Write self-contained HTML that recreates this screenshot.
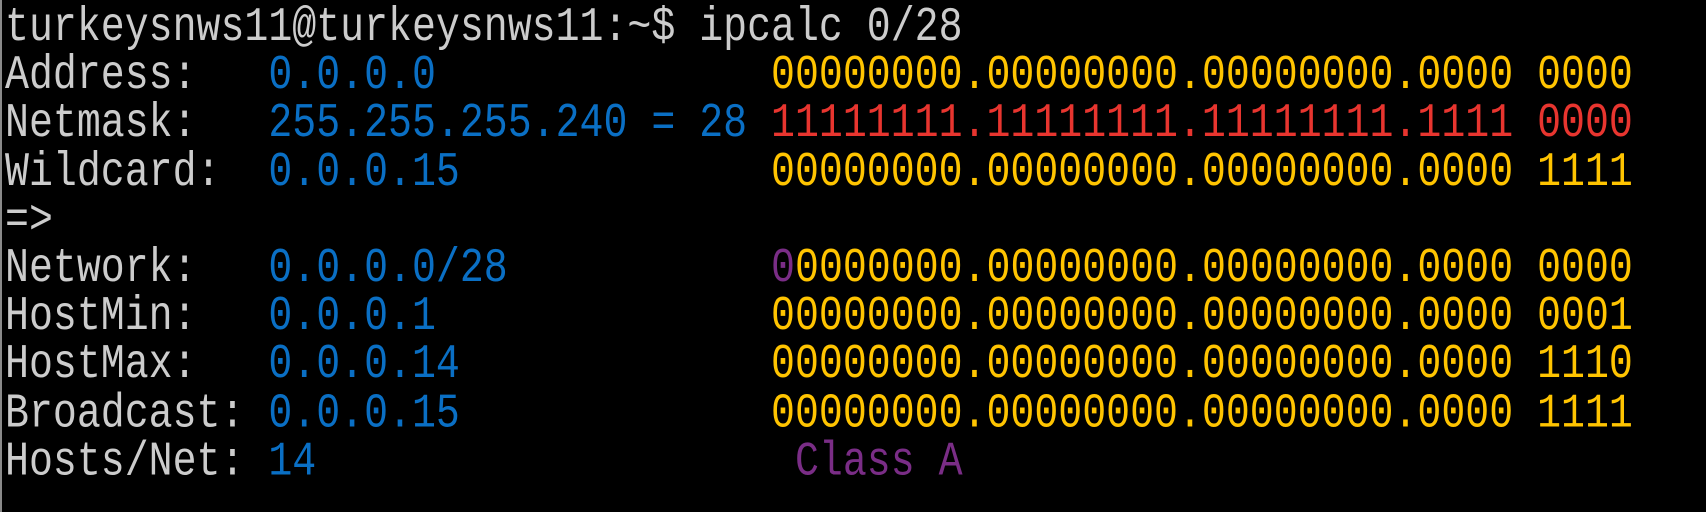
<!DOCTYPE html>
<html><head><style>
html,body{margin:0;padding:0;background:#000;}
body{width:1706px;height:512px;overflow:hidden;position:relative;border-left:2px solid #8a8a8a;box-sizing:border-box;}
pre{position:absolute;left:3px;top:3.5px;margin:0;font-family:"Liberation Mono",monospace;font-size:39.9px;line-height:40.2px;color:#cccccc;transform:scaleY(1.2);transform-origin:0 0;}
.b{color:#0a6fc4}.y{color:#ffc400}.r{color:#e8352f}.p{color:#7a2d86}
</style></head><body><pre>turkeysnws11@turkeysnws11:~$ ipcalc 0/28
Address:   <span class="b">0.0.0.0</span>              <span class="y">00000000.00000000.00000000.0000 0000</span>
Netmask:   <span class="b">255.255.255.240 = 28</span> <span class="r">11111111.11111111.11111111.1111 0000</span>
Wildcard:  <span class="b">0.0.0.15</span>             <span class="y">00000000.00000000.00000000.0000 1111</span>
=&gt;
Network:   <span class="b">0.0.0.0/28</span>           <span class="p">0</span><span class="y">0000000.00000000.00000000.0000 0000</span>
HostMin:   <span class="b">0.0.0.1</span>              <span class="y">00000000.00000000.00000000.0000 0001</span>
HostMax:   <span class="b">0.0.0.14</span>             <span class="y">00000000.00000000.00000000.0000 1110</span>
Broadcast: <span class="b">0.0.0.15</span>             <span class="y">00000000.00000000.00000000.0000 1111</span>
Hosts/Net: <span class="b">14</span>                    <span class="p">Class A</span>
</pre></body></html>
